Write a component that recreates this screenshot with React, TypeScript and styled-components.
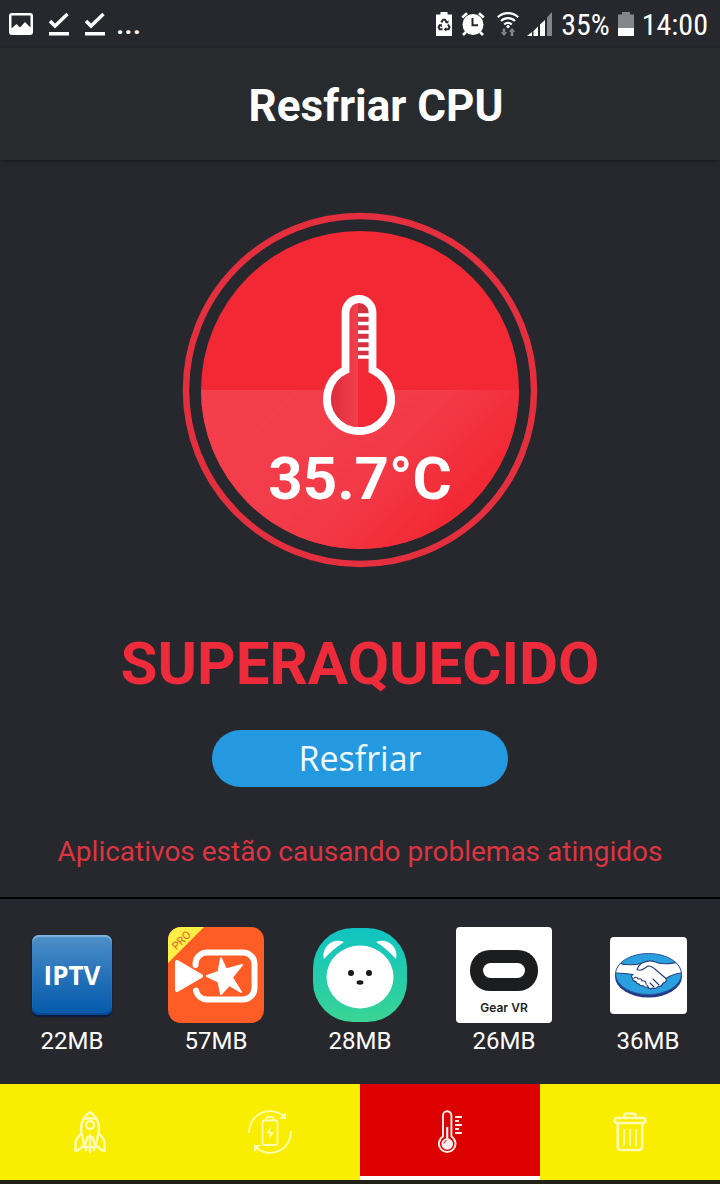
import React from "react";
import styled, { createGlobalStyle } from "styled-components";

const GlobalStyle = createGlobalStyle`
  *, *::before, *::after { box-sizing: border-box; }
  body {
    margin: 0;
    background: #26282d;
    color: #fff;
    font-family: Roboto, "Liberation Sans", sans-serif;
  }
  svg { display: block; flex: none; }
`;

const Screen = styled.div`
  min-height: 100vh;
  display: flex;
  flex-direction: column;
`;

const StatusBar = styled.div`
  height: 48px;
  padding: 0 12px 0 9px;
  display: flex;
  align-items: center;
  justify-content: space-between;
`;

const StatusGroup = styled.div<{ $gap: number }>`
  display: flex;
  align-items: center;
  gap: ${(p) => p.$gap}px;
`;

const StatusText = styled.span`
  padding-top: 2px;
  font-family: "Roboto Condensed", Roboto, sans-serif;
  font-size: 30px;
  line-height: 46px;
`;

const StatusDots = styled.span`
  margin-left: -5px;
  font-size: 30px;
  line-height: 48px;
  font-weight: 500;
`;

const Header = styled.header`
  height: 112px;
  padding: 4px 0 0 32px;
  display: flex;
  align-items: center;
  justify-content: center;
  background: #272b2d;
  box-shadow: 0 1px 4px rgba(0, 0, 0, 0.35);
`;

const Title = styled.h1`
  margin: 0;
  font-size: 44px;
  line-height: 56px;
  font-weight: 700;
`;

const Main = styled.main`
  flex: 1;
  padding: 52px 16px 26px;
  display: flex;
  flex-direction: column;
  align-items: center;
`;

const Gauge = styled.div`
  display: grid;
  justify-items: center;
  align-items: end;
  > * { grid-area: 1 / 1; }
`;

const Temperature = styled.div`
  padding-bottom: 53px;
  font-size: 60px;
  line-height: 72px;
  font-weight: 700;
`;

const Verdict = styled.h2`
  margin: 60px 0 0;
  font-size: 60px;
  line-height: 72px;
  font-weight: 700;
  color: #ee2b3b;
`;

const CoolButton = styled.button`
  width: 296px;
  height: 57px;
  margin-top: 30px;
  padding: 0 0 2px;
  border: 0;
  border-radius: 29px;
  background: #2499e0;
  color: #eefaff;
  font-family: "Open Sans", "Noto Sans", sans-serif;
  font-size: 34px;
  line-height: 54px;
  cursor: pointer;
`;

const Notice = styled.p`
  margin: 47px 0 0;
  font-size: 28px;
  line-height: 36px;
  color: #dd3442;
  text-align: center;
`;

const AppList = styled.ul`
  margin: 0;
  padding: 28px 0 29px;
  list-style: none;
  display: grid;
  grid-template-columns: repeat(5, 1fr);
  border-top: 2px solid #000;
`;

const AppItem = styled.li`
  display: flex;
  flex-direction: column;
  align-items: center;
  gap: 4px;
  font-size: 24px;
  line-height: 28px;
`;

const AppIcon = styled.div`
  height: 96px;
  display: flex;
  align-items: center;
`;

const IptvTile = styled.div`
  width: 80px;
  height: 80px;
  border-radius: 7px;
  background: linear-gradient(#5090c8, #2a75bb 45%, #0459ab);
  box-shadow: inset 0 2px 1px #7fb4e0, inset 0 -2px 1px #064795, 0 2px 2px #0a1c40;
  font-family: "Open Sans", "Noto Sans", sans-serif;
  font-size: 26px;
  line-height: 80px;
  font-weight: 700;
  text-align: center;
`;

const TabBar = styled.nav`
  display: grid;
  grid-template-columns: repeat(4, 1fr);
  border-bottom: 4px solid #232219;
`;

const Tab = styled.button<{ $active?: boolean }>`
  height: 96px;
  padding: 0;
  border: 0;
  display: flex;
  align-items: center;
  justify-content: center;
  background: ${(p) => (p.$active ? "#dc0000" : "#f9ee02")};
  box-shadow: ${(p) => (p.$active ? "inset 0 -4px #fff" : "none")};
  color: ${(p) => (p.$active ? "#fff0ee" : "#fffbb4")};
  cursor: pointer;
`;

const PictureIcon = () => (
  <svg width="24" height="24" viewBox="0 0 24 24">
    <path fill="#fff" fillRule="evenodd" d="M3 1h18a3 3 0 0 1 3 3v16a3 3 0 0 1-3 3H3a3 3 0 0 1-3-3V4a3 3 0 0 1 3-3zM2.500 3.500v13l5-4.500 3.500 3.500 5-5.500 5.500 5.500v-12z" />
  </svg>
);

const DoneIcon = () => (
  <svg width="20" height="24" viewBox="0 0 20 24">
    <path d="M1 9l5 5L18.500 2" fill="none" stroke="#fff" strokeWidth="3.400" />
    <path d="M0 20h20v3.500H0z" fill="#fff" />
  </svg>
);

const BatterySaverIcon = () => (
  <svg width="16" height="24" viewBox="0 0 16 24">
    <path d="M4.500 0h7v2.500H16V24H0V2.500h4.500z" fill="#fff" />
    <g fill="none" stroke="#26282d" strokeWidth="2">
      <path d="M5.200 10.500L7 7.700h2l2 3M12 12.500l1.500 2.800-1 2H9.500M6.500 17.300H3.600l-1-2 1.600-2.800" />
    </g>
    <path d="M8.800 10.800l3.400.8.600-3zM10.200 15v4.600L7.800 17.300zM2 13.400l3.600-1.600.6 3.200z" fill="#26282d" />
  </svg>
);

const AlarmIcon = () => (
  <svg width="24" height="24" viewBox="0 0 24 24">
    <circle cx="12" cy="12.500" r="10.500" fill="#fff" />
    <path d="M1.200 5.500L6 1.200M22.800 5.500L18 1.200M5 20l-3 3M19 20l3 3" stroke="#fff" strokeWidth="2.600" />
    <path d="M11.500 6v7.200h5.500" fill="none" stroke="#26282d" strokeWidth="2" />
  </svg>
);

const WifiIcon = () => (
  <svg width="22" height="24" viewBox="0 0 22 24">
    <g fill="none" stroke="#fff" strokeWidth="2.200">
      <path d="M.8 5.200a15 15 0 0 1 20.400 0M4 9a10 10 0 0 1 14 0M7.200 12.500a5.400 5.400 0 0 1 7.600 0" />
    </g>
    <circle cx="11" cy="14.600" r="1.600" fill="#fff" />
    <path d="M5.700 16.500h2.600v3.800h2L7 24l-3.300-3.700h2zM13.700 24h2.600v-4.300h2L15 16l-3.300 3.700h2z" fill="#85868a" />
  </svg>
);

const SignalIcon = () => (
  <svg width="26" height="24" viewBox="0 0 26 24">
    <path d="M0 24l5-4v4zM6.500 19l4.500-4.500V24H6.500zM13 12.500L18 8v16h-5z" fill="#fff" />
    <path d="M20 5.500L25 0v24h-5z" fill="#85868a" />
  </svg>
);

const BatteryIcon = () => (
  <svg width="16" height="24" viewBox="0 0 16 24">
    <path d="M4 0h8v2.500h4V16H0V2.500h4z" fill="#85868a" />
    <path d="M0 16h16v8H0z" fill="#fff" />
  </svg>
);

const thermometer = "M163.500 158V100.500a13.500 13.500 0 0 1 27 0V158A32 32 0 1 1 163.500 158Z";

const GaugeDial = () => (
  <svg width="356" height="356" viewBox="0 0 356 356">
    <defs>
      <linearGradient id="shine" gradientUnits="userSpaceOnUse" x1="100" y1="170" x2="270" y2="340">
        <stop offset="0" stopColor="#f43e4c" />
        <stop offset="0.500" stopColor="#f33b48" />
        <stop offset="0.900" stopColor="#f22834" />
      </linearGradient>
      <linearGradient id="tube" x1="0" x2="1">
        <stop offset="0" stopColor="#d92c3b" />
        <stop offset="1" stopColor="#f33f4c" />
      </linearGradient>
      <clipPath id="glass"><path d={thermometer} /></clipPath>
    </defs>
    <circle cx="178" cy="178" r="174" fill="none" stroke="#e32f3e" strokeWidth="6.500" />
    <circle cx="178" cy="178" r="159" fill="#f22834" />
    <path d="M19 178a159 159 0 0 0 318 0z" fill="url(#shine)" />
    <g clipPath="url(#glass)">
      <path d="M140 80h80v150h-80z" fill="#f22834" />
      <path d="M145 80h31v150h-31z" fill="url(#tube)" />
      <path d="M176 92h12v55h-12z" fill="#d43241" />
      <path d="M176 103h12M176 111.500h12M176 120h12M176 128.500h12M176 137h12M176 145h12" stroke="#fff" strokeWidth="3.400" />
    </g>
    <path d={thermometer} fill="none" stroke="#fff" strokeWidth="7.800" />
  </svg>
);

const VideoStarIcon = () => (
  <svg width="96" height="96" viewBox="0 0 96 96">
    <defs>
      <clipPath id="tile"><rect width="96" height="96" rx="13" /></clipPath>
    </defs>
    <g clipPath="url(#tile)">
      <path d="M0 0h96v96H0z" fill="#ff5c26" />
      <path d="M0 0h36L0 36z" fill="#ffee45" />
    </g>
    <text x="16" y="16" transform="rotate(-45 16 16)" textAnchor="middle" fontSize="11" fill="#e0602c">PRO</text>
    <path d="M27.500 38V37a11.500 11.500 0 0 1 11.500-11.500H75A11.500 11.500 0 0 1 86.500 37v24A11.500 11.500 0 0 1 75 72.500H39A11.500 11.500 0 0 1 28 63.500" fill="none" stroke="#fff" strokeWidth="6" strokeLinecap="round" />
    <path d="M9 35l24 14L9 63z" fill="#fff" stroke="#fff" strokeWidth="4" strokeLinejoin="round" />
    <path d="M53 31.500l5 11 16-4.500-10 12.500L73 65l-12-7-8 9-2.500-12.500L39 49l11.500-4z" fill="#fff" stroke="#fff" strokeWidth="2" strokeLinejoin="round" />
  </svg>
);

const BearIcon = () => (
  <svg width="94" height="94" viewBox="0 0 94 94">
    <defs>
      <linearGradient id="mint" x1="0" y1="0" x2="0" y2="1">
        <stop offset="0" stopColor="#0fc4c2" />
        <stop offset="1" stopColor="#3ad494" />
      </linearGradient>
    </defs>
    <rect width="94" height="94" rx="40" fill="url(#mint)" />
    <path d="M11 31C8 19 20 9 31 14Q20 21 11 31zM83 31C86 19 74 9 63 14Q74 21 83 31z" fill="#fff" />
    <ellipse cx="47" cy="49" rx="33.500" ry="31.500" fill="#fff" />
    <circle cx="38" cy="45" r="3" fill="#17181a" />
    <circle cx="56" cy="45" r="3" fill="#17181a" />
    <ellipse cx="47" cy="54.500" rx="3.400" ry="2.200" fill="#17181a" />
    <path d="M40 57q1 4 7 4t7-4" fill="none" stroke="#ececec" strokeWidth="1" />
  </svg>
);

const HeadsetIcon = () => (
  <svg width="96" height="96" viewBox="0 0 96 96">
    <rect width="96" height="96" rx="4" fill="#fff" />
    <rect x="14" y="23" width="68" height="41" rx="20" fill="#1c1d1f" />
    <rect x="27" y="36" width="42" height="15" rx="7.500" fill="#fff" />
    <text x="48" y="85" textAnchor="middle" fontFamily="Inter, sans-serif" fontSize="12" fontWeight="600" fill="#1c1d1f">Gear VR</text>
  </svg>
);

const HandshakeIcon = () => (
  <svg width="77" height="77" viewBox="0 0 77 77">
    <defs>
      <clipPath id="oval"><ellipse cx="38.500" cy="37" rx="33" ry="20.500" /></clipPath>
    </defs>
    <rect width="77" height="77" rx="4" fill="#fff" />
    <ellipse cx="38.500" cy="39.500" rx="33.500" ry="21" fill="#213b86" />
    <ellipse cx="38.500" cy="37" rx="33" ry="20.500" fill="#2ba0de" />
    <g clipPath="url(#oval)" stroke="#223f78" strokeWidth="1.100" strokeLinejoin="round" strokeLinecap="round">
      <path fill="#fff" d="M3 24q14 6 28 2.500 7-4 13-2 10 5 30-1V36q-10 0-18 5.500 1 4-3 4.500-1 4-5 3.500-2 3-5.500 1.500-3 2-5-1-3 1-4.500-1.500-3 1-4-1.500-3 0-3-2.500-4-.5-3-3-3-2 0-4Q15 36 3 36z" />
      <path fill="none" d="M31 26.500q-3 3-4 6 4 2 8-1.500l3-2q4 0 8 4l10 8.500M43 42l6 6M40 46l4 4M37 48l2 3M24 41q3-2 4 1 4-1 4 2 4-1 4 3" />
    </g>
    <ellipse cx="38.500" cy="37" rx="33" ry="20.500" fill="none" stroke="#28569c" strokeWidth="1" />
  </svg>
);

const RocketIcon = () => (
  <svg width="32" height="44" viewBox="0 0 32 44" fill="none" stroke="currentColor" strokeWidth="2.500" strokeLinejoin="round" strokeLinecap="round">
    <path d="M16 2C9 7 5.500 15 8 25l2.500 12h11L24 25C26.500 15 23 7 16 2z" />
    <path d="M10.500 8.500h11M7 24c-4 3-5.500 6-5.500 10v7l3-1L9 36M25 24c4 3 5.500 6 5.500 10v7l-3-1L23 36M16 25v17M10.500 37l3-10M21.500 37l-3-10M12 37v3M20 37v3" />
    <circle cx="16" cy="15" r="4" />
  </svg>
);

const RechargeIcon = () => (
  <svg width="44" height="46" viewBox="0 0 44 46" fill="none" stroke="currentColor" strokeWidth="1.800">
    <path d="M1 24A21 21 0 0 1 36 7.500M43 22A21 21 0 0 1 8 38.500" />
    <path d="M38 3v7h-7zM6 43v-7h7z" fill="currentColor" stroke="none" />
    <rect x="14.500" y="11.500" width="15" height="24.500" rx="1.500" />
    <path d="M18.500 11V9.500a1.500 1.500 0 0 1 1.500-1.500h4a1.500 1.500 0 0 1 1.500 1.500V11" />
    <path d="M23 17l-4.500 7.500H22L20.800 31l5-8H22z" fill="currentColor" stroke="none" />
  </svg>
);

const ThermometerIcon = () => (
  <svg width="24" height="44" viewBox="0 0 24 44" fill="none" stroke="currentColor" strokeWidth="1.900">
    <path d="M5 26.500V5.500a4.200 4.200 0 0 1 8.400 0v21a8.300 8.300 0 1 1-8.400 0z" />
    <path d="M9.200 17v12" strokeWidth="2.200" />
    <circle cx="9.200" cy="34" r="5.800" fill="currentColor" stroke="none" />
    <path d="M5.800 33.500q.6-2.500 2.800-3" stroke="#dc0000" strokeWidth="1" />
    <path d="M17 7h7M17 11h4M17 15h7M17 19h4M17 23h7" />
  </svg>
);

const TrashIcon = () => (
  <svg width="34" height="40" viewBox="0 0 34 40" fill="none" stroke="currentColor" strokeWidth="2.600">
    <rect x="1.500" y="6" width="31" height="5" rx="2.500" />
    <path d="M11.500 6V3.500A2 2 0 0 1 13.500 1.500h7a2 2 0 0 1 2 2V6M4.800 11v24a3 3 0 0 0 3 3h18.400a3 3 0 0 0 3-3V11" />
    <path d="M11 17v17M17 17v17M23 17v17" strokeWidth="1.800" />
  </svg>
);

const apps = [
  { size: "22MB", icon: <IptvTile>IPTV</IptvTile> },
  { size: "57MB", icon: <VideoStarIcon /> },
  { size: "28MB", icon: <BearIcon /> },
  { size: "26MB", icon: <HeadsetIcon /> },
  { size: "36MB", icon: <HandshakeIcon /> },
];

const tabs = [
  { label: "Acelerar", icon: <RocketIcon /> },
  { label: "Bateria", icon: <RechargeIcon /> },
  { label: "Resfriar CPU", icon: <ThermometerIcon />, active: true },
  { label: "Limpar", icon: <TrashIcon /> },
];

export default function App() {
  return (
    <Screen>
      <GlobalStyle />
      <StatusBar>
        <StatusGroup $gap={16}>
          <PictureIcon />
          <DoneIcon />
          <DoneIcon />
          <StatusDots>...</StatusDots>
        </StatusGroup>
        <StatusGroup $gap={12}>
          <StatusGroup $gap={9}>
            <BatterySaverIcon />
            <AlarmIcon />
          </StatusGroup>
          <StatusGroup $gap={8}>
            <WifiIcon />
            <SignalIcon />
            <StatusText>35%</StatusText>
            <BatteryIcon />
            <StatusText>14:00</StatusText>
          </StatusGroup>
        </StatusGroup>
      </StatusBar>
      <Header>
        <Title>Resfriar CPU</Title>
      </Header>
      <Main>
        <Gauge>
          <GaugeDial />
          <Temperature>35.7°C</Temperature>
        </Gauge>
        <Verdict>SUPERAQUECIDO</Verdict>
        <CoolButton type="button">Resfriar</CoolButton>
        <Notice>Aplicativos estão causando problemas atingidos</Notice>
      </Main>
      <AppList>
        {apps.map((app) => (
          <AppItem key={app.size}>
            <AppIcon>{app.icon}</AppIcon>
            {app.size}
          </AppItem>
        ))}
      </AppList>
      <TabBar>
        {tabs.map((tab) => (
          <Tab key={tab.label} type="button" aria-label={tab.label} $active={tab.active}>
            {tab.icon}
          </Tab>
        ))}
      </TabBar>
    </Screen>
  );
}
